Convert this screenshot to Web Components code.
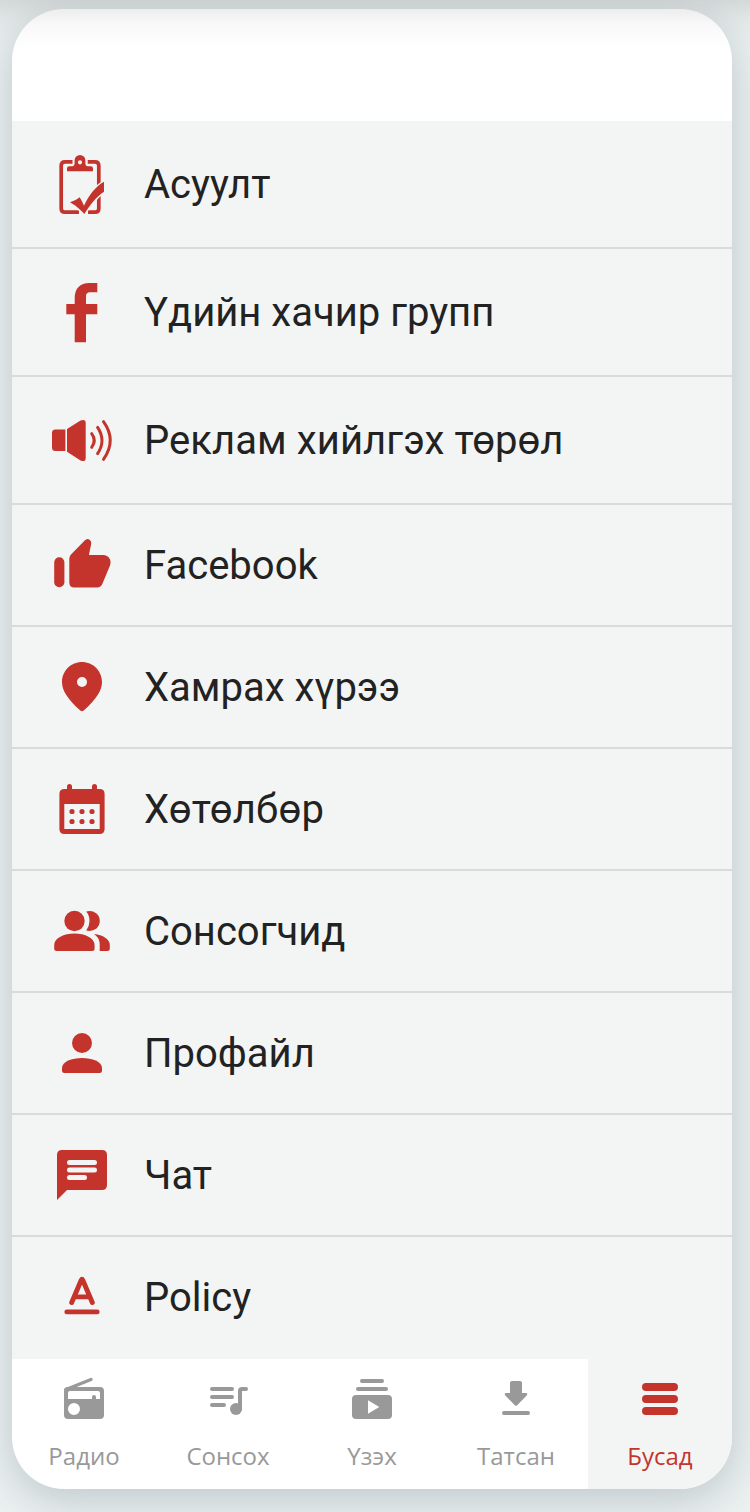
<!DOCTYPE html>
<html lang="mn">
<head>
<meta charset="utf-8">
<title>Бусад</title>
<style>
html,body{margin:0;height:100%}
body{overflow:hidden;background:#ecf1f1}
</style>
</head>
<body>
<app-screen>
  <menu-row tall icon="clipboard">Асуулт</menu-row>
  <menu-row tall icon="fb">Үдийн хачир групп</menu-row>
  <menu-row tall icon="speaker" style="letter-spacing:.08px">Реклам хийлгэх төрөл</menu-row>
  <menu-row icon="thumb">Facebook</menu-row>
  <menu-row icon="pin">Хамрах хүрээ</menu-row>
  <menu-row icon="calendar" style="letter-spacing:.25px">Хөтөлбөр</menu-row>
  <menu-row icon="people">Сонсогчид</menu-row>
  <menu-row icon="person">Профайл</menu-row>
  <menu-row icon="chat">Чат</menu-row>
  <menu-row last icon="policy">Policy</menu-row>
  <nav-tab slot="nav" icon="radio">Радио</nav-tab>
  <nav-tab slot="nav" icon="music">Сонсох</nav-tab>
  <nav-tab slot="nav" icon="video">Үзэх</nav-tab>
  <nav-tab slot="nav" icon="download">Татсан</nav-tab>
  <nav-tab slot="nav" active icon="menu">Бусад</nav-tab>
</app-screen>
<script>
const ICONS = {
  clipboard: `<path d="M20.5 7.800H13Q9.200 7.800 9.200 11.600V54.400Q9.200 58.200 13 58.200H27M36 58.200H43Q46.800 58.200 46.800 54.400V11.600Q46.800 7.800 43 7.800H35.700" fill="none" stroke="currentColor" stroke-width="3.700"/>
    <path fill-rule="evenodd" d="M15 17.300V14.500Q15 12.300 17.200 12.300H20.500Q22.600 12 22.600 9.500V6.300A5.400 5.300 0 0 1 33.400 6.300V9.500Q33.400 12 35.500 12.300H38.800Q41 12.300 41 14.500V17.300ZM28 6.200A2.100 2.100 0 1 0 28 10.400A2.100 2.100 0 1 0 28 6.200Z"/>
    <path d="M18 48.300Q24 46.500 27.700 43.300Q30 47 32 51.700C37 41 44 32 52 27.700V37.700C44 43 38 51 32.300 60C27 54 22 50.500 18 48.300Z" stroke="#f3f5f4" stroke-width="3" paint-order="stroke"/>`,
  fb: `<path d="M22.700 60.300V32.300H14.300V22H22.700V16C22.700 6.500 28 1 37.500 1H45.300V10.300H38.500C35 10.300 34 11.800 34 15V22H45.300V32.300H34V60.300Z"/>`,
  speaker: `<path d="M13.400 19.600V41H3.500Q0 41 0 37.500V23Q0 19.600 3.500 19.600ZM15 19L28.500 10.500Q33.700 8.500 33.700 13V48Q33.700 52.500 28.500 50.500L15 41.700Z"/>
    <path d="M39.700 23.600Q44.800 30.500 39.700 37.300M45.600 17.400Q54.400 30.500 45.600 43.600M51.500 11.700Q65 30.500 51.500 49.300" fill="none" stroke="currentColor" stroke-width="3" stroke-linecap="round"/>`,
  thumb: `<rect x="2.200" y="22.300" width="10.200" height="30" rx="5.100"/>
    <path d="M17.300 23.800Q17.300 21.300 19 19.500L32.700 5.600Q35 3 37.500 4.700Q39.800 6.300 39.200 9L36.900 20H51C57 20 60 25.500 58 30.500L50.500 48.500Q49 52.500 45 52.500H22.300Q17.300 52.500 17.300 47.500Z"/>`,
  pin: `<path fill-rule="evenodd" d="M30 5C19 5 10 13.800 10 25C10 33.500 15.500 42 28 53.300Q30 55 32 53.300C44.500 42 50 33.500 50 25C50 13.800 41 5 30 5ZM30 20A5 5 0 1 1 30 30A5 5 0 1 1 30 20Z"/>`,
  calendar: `<path fill-rule="evenodd" d="M15 10V7.500A2.500 2.500 0 0 1 20 7.500V10H40V7.500A2.500 2.500 0 0 1 45 7.500V10H47.700Q52.600 10 52.600 15V50Q52.600 55 47.700 55H12.400Q7.400 55 7.400 50V15Q7.400 10 12.400 10ZM12.300 25V50H47.700V25Z"/>
    <path d="M20 32.500h0M30 32.500h0M40 32.500h0M20 42.500h0M30 42.500h0M40 42.500h0" stroke="currentColor" stroke-width="5.200" stroke-linecap="round"/>`,
  people: `<circle cx="22.500" cy="20" r="10.200"/><path d="M34.200 10.600Q39.800 9 44.500 12.600A10 10 0 0 1 44.500 27.400Q39.800 31 34.200 29.400Q37.500 25 37.500 20Q37.500 14.500 34.200 10.600ZM2.200 44C2.200 37 12 32.500 22.500 32.500S42.600 37 42.600 44V47.500Q42.600 50 40 50H4.700Q2.200 50 2.200 47.500ZM42 33C51 34 57.800 38 57.800 44V47.500Q57.800 50 55.300 50H47.700V43C47.700 39 46 35.800 42 33Z"/>`,
  person: `<circle cx="30" cy="20" r="10"/><path d="M10 45C10 38.500 20 35 30 35S50 38.500 50 45V47.500Q50 50 47.500 50H12.500Q10 50 10 47.500Z"/>`,
  chat: `<path d="M10 5H50Q55 5 55 10V40Q55 45 50 45H15L5 55V10Q5 5 10 5Z"/><path d="M17.500 17.500H42.500M17.500 25H42.500M17.500 32.500H32.500" stroke="#f3f5f4" stroke-width="5" stroke-linecap="round"/>`,
  policy: `<path d="M19.700 35.500L29.300 13Q30 11.500 30.700 13L40.300 35.500M22.500 29.900H37.500M14.800 44.900H45.200" fill="none" stroke="currentColor" stroke-width="4.900" stroke-linecap="round" stroke-linejoin="round"/>`,
  radio: `<path d="M6 14.500L31 4.500" stroke="currentColor" stroke-width="3.400" stroke-linecap="round"/>
    <path fill-rule="evenodd" d="M8 12H40Q44 12 44 16V40Q44 44 40 44H8Q4 44 4 40V16Q4 12 8 12ZM10 16Q8 16 8 18V24H32V22A2 2 0 0 1 36 22V24H40V18Q40 16 38 16ZM14 28A6 6 0 1 0 14 40A6 6 0 1 0 14 28Z"/>`,
  music: `<path d="M8 14H28M8 22H28M8 30H20" stroke="currentColor" stroke-width="4" stroke-linecap="round"/><path d="M36 34V16Q36 14 38 14H42" fill="none" stroke="currentColor" stroke-width="4" stroke-linecap="round"/><circle cx="32" cy="34" r="6"/>`,
  video: `<path d="M14 6H34M10 14H38" stroke="currentColor" stroke-width="4" stroke-linecap="round"/><path fill-rule="evenodd" d="M8 20H40Q44 20 44 24V40Q44 44 40 44H8Q4 44 4 40V24Q4 20 8 20ZM20 25.300V38.700L31.300 32Z"/>`,
  download: `<path d="M20 6H28Q30 6 30 8V18H33.500Q36.500 18.300 34.700 20.500L25.200 30.200Q24 31.300 22.800 30.200L13.300 20.500Q11.500 18.300 14.500 18H18V8Q18 6 20 6Z"/><path d="M12 38H36" stroke="currentColor" stroke-width="4" stroke-linecap="round"/>`,
  menu: `<path d="M10 12H38M10 24H38M10 36H38" stroke="currentColor" stroke-width="8" stroke-linecap="round"/>`
};

class AppScreen extends HTMLElement {
  constructor() {
    super();
    this.attachShadow({ mode: 'open' }).innerHTML = `
      <style>
        :host{display:block;box-sizing:border-box;position:relative;height:1512px;padding:9px 18px 23px 12px;overflow:hidden}
        .card{height:1480px;border-radius:52px;background:#fff;box-shadow:0 10px 44px rgba(60,80,95,.27);}
        .clip{height:100%;border-radius:inherit;overflow:hidden;display:flex;flex-direction:column}
        header{height:112px;flex:none}
        main{flex:1;background:#f3f5f4}
        nav{display:flex;height:130px;flex:none}
        .shade{position:absolute;inset:0 0 auto 0;height:52px;pointer-events:none;
          background:linear-gradient(rgba(0,0,0,.1),rgba(0,0,0,.07) 9px,rgba(0,0,0,.03) 22px,rgba(0,0,0,.01) 36px,transparent)}
      </style>
      <div class="card"><div class="clip">
        <header></header>
        <main><slot></slot></main>
        <nav><slot name="nav"></slot></nav>
      </div></div>
      <div class="shade"></div>`;
  }
}

class MenuRow extends HTMLElement {
  constructor() {
    super();
    this.attachShadow({ mode: 'open' }).innerHTML = `
      <style>
        :host{display:flex;box-sizing:border-box;height:122px;align-items:center;padding-left:40px;gap:32px;
          border-bottom:2px solid #d9dbdb;font:40px/60px Roboto,"Noto Sans",sans-serif;color:#222;white-space:nowrap}
        :host([tall]){height:128px}
        :host([last]){border-color:transparent}
        svg{width:60px;height:60px;flex:none;color:#c4342c;fill:currentColor;overflow:visible}
        span{padding-top:2px}
      </style>
      <svg viewBox="0 0 60 60">${ICONS[this.getAttribute('icon')]}</svg><span><slot></slot></span>`;
  }
}

class NavTab extends HTMLElement {
  constructor() {
    super();
    this.attachShadow({ mode: 'open' }).innerHTML = `
      <style>
        :host{flex:1;display:flex;box-sizing:border-box;flex-direction:column;align-items:center;padding-top:16px;
          font:24px/34px "Open Sans","Noto Sans",sans-serif;color:#999;white-space:nowrap}
        :host([active]){background:#f3f5f4;color:#c4342c}
        svg{width:48px;height:48px;flex:none;fill:currentColor}
        span{margin-top:16px}
      </style>
      <svg viewBox="0 0 48 48">${ICONS[this.getAttribute('icon')]}</svg><span><slot></slot></span>`;
  }
}

customElements.define('app-screen', AppScreen);
customElements.define('menu-row', MenuRow);
customElements.define('nav-tab', NavTab);
</script>
</body>
</html>
